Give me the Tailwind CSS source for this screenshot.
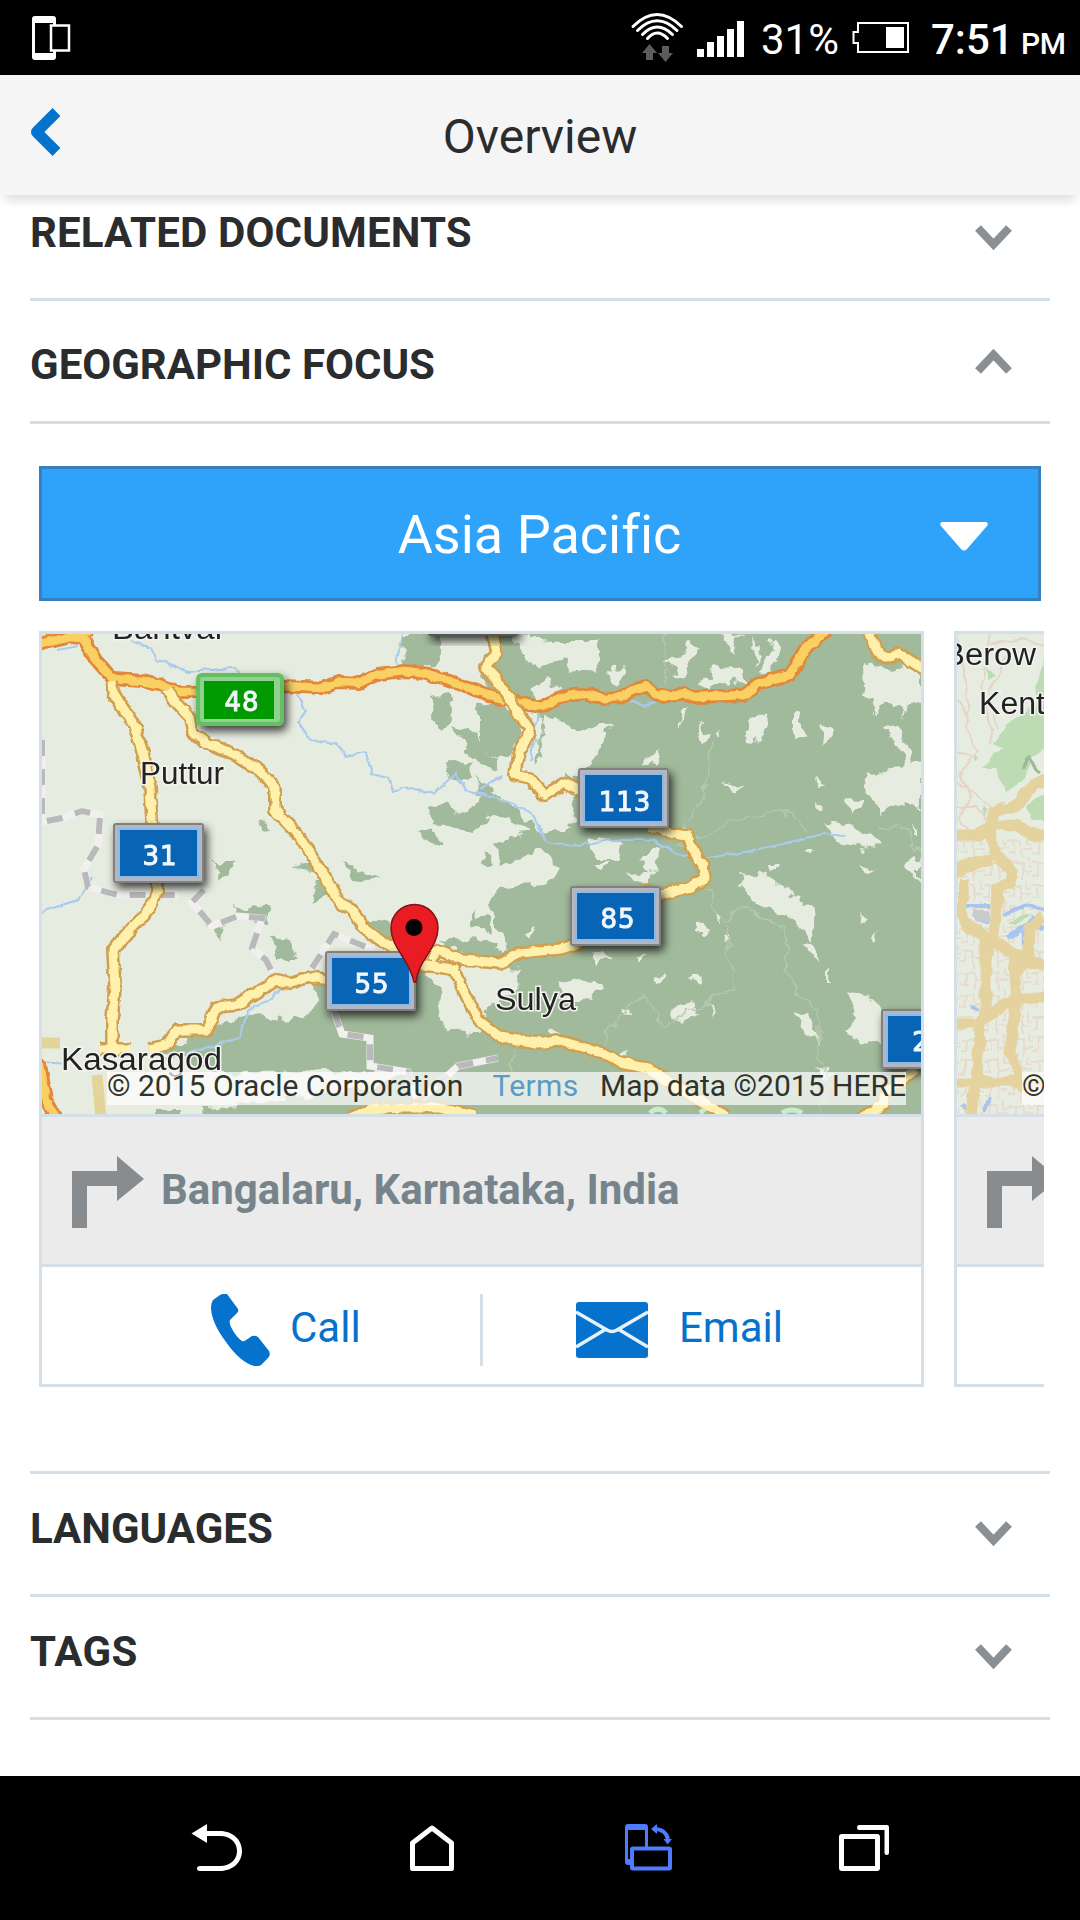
<!DOCTYPE html>
<html lang="en">
<head>
<meta charset="utf-8">
<title>Overview</title>
<script src="https://cdn.jsdelivr.net/npm/@tailwindcss/browser@4"></script>
</head>
<body class="w-[1080px] h-[1920px] overflow-hidden bg-white font-['Roboto',sans-serif] text-[#2b2c2d]">
<div class="flex flex-col w-[1080px] h-[1920px]">

  <!-- Status bar -->
  <div class="flex h-[75px] shrink-0 items-start bg-black text-white">
    <svg class="ml-[30px] block" width="42" height="75" viewBox="30 0 42 75" fill="none">
      <path fill="#fff" fill-rule="evenodd" d="M35 16h18q3 0 3 3v38q0 3-3 3H35q-3 0-3-3V19q0-3 3-3zM35 23v30h18V23z"/>
      <rect x="51" y="25.500" width="18" height="25" fill="#000" stroke="#fff" stroke-width="2.500"/>
    </svg>
    <svg class="ml-[558px] block" width="116" height="75" viewBox="630 0 116 75" fill="none">
      <g stroke="#fff" stroke-width="3" stroke-linecap="round">
        <path d="M633 26.500Q657 2.500 681.500 26.500"/>
        <path d="M637.500 30.500Q657 11 677 30.500"/>
        <path d="M642.500 34.500Q657 19.500 672.500 34.500"/>
        <path d="M647.500 38.500Q657 27.500 667.500 38.500"/>
      </g>
      <path fill="#5c5c5c" d="M649.500 44l7.500 9h-4v7h-7v-7h-4zM662 46h7v7h4l-7.500 9-7.500-9h4z"/>
      <path fill="#fff" d="M697 49h7v8h-7zM707 42h7v15h-7zM717 36h7v21h-7zM727 29h7v28h-7zM737 21h7v36h-7z"/>
    </svg>
    <span class="ml-[15px] mt-[19px] w-[82px] text-[42px] leading-[42px] whitespace-nowrap">31%</span>
    <svg class="ml-[8px] block" width="60" height="75" viewBox="851 0 60 75" fill="none">
      <path d="M858 23h50v29h-50v-9h-4.500V32h4.500z" stroke="#fff" stroke-width="2"/>
      <path fill="#fff" d="M886 27h18v21h-18z"/>
    </svg>
    <span class="ml-[20px] mt-[19px] w-[90px] text-[42px] leading-[42px] font-medium whitespace-nowrap">7:51</span>
    <span class="mt-[29px] text-[30px] leading-[30px] font-medium whitespace-nowrap tracking-[-0.5px]">PM</span>
  </div>

  <!-- Title bar -->
  <div class="relative z-10 flex h-[120px] shrink-0 items-start bg-[#f5f5f5] shadow-[0_11px_9px_-5px_rgba(0,0,0,0.12)]">
    <svg class="ml-[30px] mt-[33px] block" width="31" height="48" viewBox="0 0 31 48"><path fill="none" stroke="#0572ce" stroke-width="11" stroke-linejoin="round" d="M26.500 4L6.500 24l20 20"/></svg>
    <h1 class="mt-[38px] ml-[-61px] w-full text-center text-[48px] leading-[48px] font-normal">Overview</h1>
  </div>

  <!-- Content -->
  <div class="flex h-[1581px] shrink-0 flex-col px-[30px]">
    <div class="flex h-[106px] shrink-0 justify-between border-b-[3px] border-[#d5dfe7] pr-[38px]">
      <h2 class="pt-[17px] text-[42px] leading-[42px] font-bold tracking-[0.16px]">RELATED DOCUMENTS</h2>
      <svg class="mt-[30px] block" width="37" height="26" viewBox="0 0 37 26"><path fill="none" stroke="#898f93" stroke-width="8" d="M3 3l15.500 16.500L34 3"/></svg>
    </div>
    <div class="flex h-[123px] shrink-0 justify-between border-b-[3px] border-[#dcdcdc] pr-[38px]">
      <h2 class="pt-[43px] text-[42px] leading-[42px] font-bold">GEOGRAPHIC FOCUS</h2>
      <svg class="mt-[47px] block" width="37" height="26" viewBox="0 0 37 26"><path fill="none" stroke="#898f93" stroke-width="8" d="M3 23L18.500 6.500 34 23"/></svg>
    </div>

    <div class="mx-[9px] mt-[42px] flex h-[135px] shrink-0 items-center border-[3px] border-[#3580c0] bg-[#2ea3f9] text-white">
      <div class="ml-[97px] flex-1 pt-[2px] text-center text-[54px] leading-[54px] [font-variant-ligatures:none]">Asia Pacific</div>
      <svg class="mr-[50px] mt-[4px] block" width="48" height="30" viewBox="0 0 48 30"><path fill="#fff" d="M2 1h44q3 1 1 4L27 28q-3 3-6 0L1 5Q-1 2 2 1z"/></svg>
    </div>

    <!-- Location cards -->
    <div class="ml-[9px] mr-[6px] mt-[30px] flex h-[756px] shrink-0 gap-[30px] overflow-hidden">
      <div class="flex w-[885px] shrink-0 flex-col border-[3px] border-[#d5dfe7]">
        <div class="relative h-[480px] shrink-0 overflow-hidden bg-[#c4d1bf]">
          <svg class="block blur-[0.6px]" width="879" height="480" viewBox="42 634 879 480" fill="none">
            <defs>
              <filter id="rag" x="0" y="0" width="1" height="1"><feTurbulence type="fractalNoise" baseFrequency="0.06" numOctaves="3" seed="4"/><feDisplacementMap in="SourceGraphic" scale="18" xChannelSelector="R" yChannelSelector="G"/></filter>
              <filter id="wob" filterUnits="userSpaceOnUse" x="30" y="620" width="900" height="510"><feTurbulence type="fractalNoise" baseFrequency="0.09" numOctaves="2" seed="8"/><feDisplacementMap in="SourceGraphic" scale="6" xChannelSelector="R" yChannelSelector="G"/></filter>
              <filter id="sh" x="-20%" y="-20%" width="150%" height="160%"><feDropShadow dx="3" dy="5" stdDeviation="5" flood-color="#000" flood-opacity=".75"/></filter>
              <g id="shield"><rect width="91" height="60" rx="3" fill="#808080" filter="url(#sh)"/><rect x="2" y="2" width="87" height="56" fill="#b3b8c0"/><rect x="5" y="5" width="81" height="50" fill="#8fb9e6"/><rect x="7" y="7" width="77" height="46" fill="#0865b6"/></g>
            </defs>
            <rect x="42" y="634" width="879" height="480" fill="#e7ece1"/>
            <g filter="url(#rag)">
              <rect x="20" y="600" width="920" height="540" fill="none"/>
              <g fill="#a1ba9b">
                <!-- forest -->
                <path d="M500 600H960V1150H205L203 1106L250 1104L300 1098L360 1088L400 1078L380 1071L215 1072L160 1055L190 1036L217 1027L243 1013L273 1019L300 1018L320 1003L318 985L330 970L400 965L440 985L445 1030L478 1035L492 1002L515 997L520 968L485 966L483 950L508 950L500 930L488 905L502 888L542 884L562 870L540 850L500 866L498 845L530 828L480 810L478 780L540 830L570 830L575 790L560 770L535 765L540 720L520 700L492 690L480 670L500 662Z"/>
                <path d="M402 634h35l5 20-5 14h-36zM478 700l40 8 6 20-14 30-32-6z"/>
                <path d="M433 697l18-5 2 22-12 14-12-12zM452 725l20 6 12 22 14 4-4 12-24-12zM447 760l28 5-4 17-18-2zM430 808l20-6 10 12 22-14 6 14-14 18-42-8zM420 832l14-1 8 14-12-2zM258 820l12 4 2 9-12-3zM215 862l22 0-18 20zM232 902l38 8-2 14-18-2zM272 936l18 4 8 18-20 0zM204 928l20 0-4 7zM345 862l20 8 14 12-26-4zM312 882l16 2-14 24zM355 918l30 4 20 22-40-8zM290 866l30-2-10 8zM484 850l10 12-14 4zM470 912l20 6 2 12-18-4zM440 940l60 4-4 14-36-2zM155 1106l22 0 0 12-22 0z"/>
              </g>
              <g fill="#e7ece1">
                <!-- clearings -->
                <path d="M512 634l40 4 18 2 30 0-6 34-22-2-12-14-20 8-18-6zM532 690l12-14 18 18-22 6zM608 668l16-4-6 26-8-4zM690 640l10 8-18 30-12 2 4-14-12-6 20-4zM722 634l20 4-10 16zM752 640l10 6-6 20zM772 640l8 8-10 28-8-8zM712 664l30 6 10 18-26-8-16 8zM695 684l20-6-8 16zM542 716l30 12 16 0 20-6-10 30-16 24-44-8zM646 762l10-10 0 16zM682 708l8 0-8 16zM746 720l22-8-8 30-12-2zM792 712l14 8-2 20-12-2zM824 722l10 10-12 10zM694 726l14 8-6 6zM714 734l10-4-8 10zM722 784l18 4-4 6z"/>
                <path d="M862 664l30 6 29-10v44l-20 12-10-14-16 10-12-24zM884 730l14-8 8 20 10 24-12-2-6-20zM862 776l30-6 28-12v50l-20-4-20 12zM846 798l18 2-10 14zM816 775l8 10-6 6zM812 800l10 6-8 2zM824 820l30 8 28 16-20 6-30-14zM912 824l8 12-6 0zM804 850l10 0-6 6zM740 870l30 8 26 18 18 20-4 30-16-26-30-14-26-18zM768 864l10 0-6 10zM800 944l14 4 6 14-12-6zM856 868l20 4-10 6zM860 912l8 10-6 4zM870 940l10-8-6 12zM826 968l6 12-6 0zM914 912l8 20zM848 990l20 6 22 20-4 36-42-20 16-12zM794 1008l18 14 8 20-20-20zM906 868l12-10 0 24z"/>
                <path d="M592 838l30 8-4 12-30 0zM590 865l20-6-6 16zM640 860l16-12-4 24zM626 876l30-6-10 14zM594 952l14 4-10 8zM636 952l12 2-8 6zM652 972l10 2-6 8zM686 974l22 4-6 8zM700 920l10 8-10 6zM718 910l4 6-6 12zM724 936l8 0-4 8zM672 1016l16-16 10 14-14 10zM706 1000l8 12-4 4zM556 985l26-8 20 8-8 16-30-4zM618 1012l14 2-10 4zM525 930l12-4-8 12zM548 1028l14 6-12 2zM620 1050l8 4-8 2zM815 1068l20 6-14 4z"/>
              </g>
              <path stroke="#b5c8ae" stroke-width="1.500" d="M665 634v50M710 742l-4 50-20 38-6 16 40-20 40-12 30 0 20 20M706 892l20 30 14-16 30 16 16 8 0 40 12 22 20 20 0 40 12 30-10 40M728 924l6 60-40 24-30 20-22-34-35 40 2 20M515 1080l-4-30M880 830l22-4 19 32"/>
            </g>
            <!-- rivers -->
            <g filter="url(#wob)" stroke="#a9cbee" stroke-width="2.200">
              <path d="M130 640l20 8 8 12 22 8 8 4 46-4 6 5M56 650l22-4M298 694l8 16-8 14 8 12 16 6 14 2 10 12 20-4 6 22 16 4 6 12 20-2 20 6 22-20 10 16 26 7M402 634l-6 30M480 790l22-14M482 794l20 6 28 12 18 30 24 4 40-6 40 0 26 14 30 4 50-8 65-16 22 2M538 712l-8 50M42 912l36-12 14-22M160 1060l38-10 40-12 12-30 20-8 16-20 36-4M630 700l14 6 12-4M42 1062l24 2"/>
            </g>
            <!-- district boundaries -->
            <path stroke="#f1f0ef" stroke-width="7" d="M42 740v30l0 52 20-4 20-7 18 4-2 30-14 24 4 18 30 8h60M204 890l-12 12 20 24 26-10 24 2-10 30 14 12 6 12M312 968l22-34 20 8 20 8M334 1012l8 22 28 4 0 28 38 6 10 30 40-36 40-8"/>
            <path stroke="#b9b9bb" stroke-width="6" stroke-dasharray="16 13" d="M42 740v30l0 52 20-4 20-7 18 4-2 30-14 24 4 18 30 8h60M204 890l-12 12 20 24 26-10 24 2-10 30 14 12 6 12M312 968l22-34 20 8 20 8M334 1012l8 22 28 4 0 28 38 6 10 30 40-36 40-8"/>
            <path stroke="#e3d49b" stroke-width="11" d="M42 1043h18M97 1075l4 45"/>
            <!-- roads -->
            <g filter="url(#wob)" stroke-linejoin="round">
              <path stroke="#e0883a" stroke-width="14" d="M36 645L70 637L83 638L96 660L113 679L143 681L160 685L180 692L240 692L284 686L322 688L340 682L360 683L378 674L405 671L428 674L455 683L480 692L500 699L520 703L540 707L562 697L582 694L605 698L620 697L634 690L646 686L655 694L672 697L683 693L695 697L744 695L757 684L790 675L803 652L830 626M86 636l4-16M38 1060l8 40 14 26"/>
              <path stroke="#fbd062" stroke-width="8.500" d="M36 645L70 637L83 638L96 660L113 679L143 681L160 685L180 692L240 692L284 686L322 688L340 682L360 683L378 674L405 671L428 674L455 683L480 692L500 699L520 703L540 707L562 697L582 694L605 698L620 697L634 690L646 686L655 694L672 697L683 693L695 697L744 695L757 684L790 675L803 652L830 626M86 636l4-16M38 1060l8 40 14 26"/>
              <path stroke="#cfa050" stroke-width="14" d="M112 680L113 693L133 723L143 753L150 787L152 820L158 887L153 903L140 920L127 933L113 950L115 987L112 1020L112 1050M167 690L177 703L190 717L193 733L210 745L230 752L263 773L275 787L275 810L297 833L310 853L325 877L340 903L353 910L363 927L380 940L397 950L425 965L445 968L455 970L463 990L478 1020L500 1037L537 1043L557 1040L603 1053L620 1063L647 1068L670 1083L693 1097L727 1116M430 960L438 950L463 960L500 963L520 953L560 949L582 942M640 890L662 894L690 888L705 878L702 862L695 855L688 836L670 833L650 826M100 1049h30M150 1049L167 1045L177 1030L207 1030L217 1007L237 1005L277 980L290 983L310 977L330 980M492 628L497 653L485 667L497 680L510 700L530 730L517 760L515 775L530 778L545 795L563 783L582 792M866 622L876 650L886 658L900 654L926 671M350 1118L370 1110L400 1108L440 1108L475 1116M860 1118L883 1105L885 1093L915 1070"/>
              <path stroke="#fff1ab" stroke-width="9" d="M112 680L113 693L133 723L143 753L150 787L152 820L158 887L153 903L140 920L127 933L113 950L115 987L112 1020L112 1050M167 690L177 703L190 717L193 733L210 745L230 752L263 773L275 787L275 810L297 833L310 853L325 877L340 903L353 910L363 927L380 940L397 950L425 965L445 968L455 970L463 990L478 1020L500 1037L537 1043L557 1040L603 1053L620 1063L647 1068L670 1083L693 1097L727 1116M430 960L438 950L463 960L500 963L520 953L560 949L582 942M640 890L662 894L690 888L705 878L702 862L695 855L688 836L670 833L650 826M100 1049h30M150 1049L167 1045L177 1030L207 1030L217 1007L237 1005L277 980L290 983L310 977L330 980M492 628L497 653L485 667L497 680L510 700L530 730L517 760L515 775L530 778L545 795L563 783L582 792M866 622L876 650L886 658L900 654L926 671M350 1118L370 1110L400 1108L440 1108L475 1116M860 1118L883 1105L885 1093L915 1070"/>
            </g>
            <rect x="428" y="612" width="90" height="24" rx="3" fill="#555" filter="url(#sh)"/>
            <!-- place names -->
            <g font-family="Liberation Sans, sans-serif" font-size="31" fill="#222" stroke="#f3f3ef" stroke-width="3" paint-order="stroke">
              <text x="112" y="639" textLength="110" lengthAdjust="spacingAndGlyphs">Bantval</text>
              <text x="140" y="784" textLength="84" lengthAdjust="spacingAndGlyphs">Puttur</text>
              <text x="495" y="1010" textLength="81" lengthAdjust="spacingAndGlyphs">Sulya</text>
              <text x="61" y="1070" textLength="161" lengthAdjust="spacingAndGlyphs">Kasaragod</text>
            </g>
            <!-- route shields -->
            <rect x="196" y="673" width="88" height="53" rx="6" fill="#62bf62" filter="url(#sh)"/><rect x="200" y="677" width="80" height="45" rx="3" fill="#8fd18f"/><rect x="204" y="681" width="70" height="38" fill="#009a00"/>
            <use href="#shield" x="113" y="823"/><use href="#shield" x="578" y="768"/><use href="#shield" x="570" y="886"/><use href="#shield" x="325" y="951"/><use href="#shield" x="881" y="1009"/>
            <g font-family="DejaVu Sans, sans-serif" font-size="26" fill="#f2f7fc" stroke="#f2f7fc" stroke-width="1" text-anchor="middle" letter-spacing="1">
              <text x="242" y="711">48</text><text x="160" y="865">31</text><text x="625" y="811">113</text><text x="618" y="928">85</text><text x="372" y="993">55</text><text x="921" y="1051">2</text>
            </g>
            <path d="M414 982C410 960 391 948 391 928a23.500 23.500 0 0 1 47 0C438 948 418 960 416 982z" fill="#e91c24" stroke="#7d1418" stroke-width="1.500"/>
            <circle cx="414" cy="927.500" r="8.500" fill="#000"/>
            <path d="M650 1113q8-8 16 0M700 1113l5-4M782 1113q10-6 20 0" stroke="#c8ecd0" stroke-width="5"/>
          </svg>
          <div class="absolute top-[438px] left-[65px] flex h-[33px] w-[799px] bg-white/70 text-[30px] leading-[28px] whitespace-nowrap text-[#2f332c]">
            <span class="w-[388px]">© 2015 Oracle Corporation</span>
            <span class="w-[108px] text-[#5a9bc6] tracking-[0.3px]">Terms</span>
            <span>Map data ©2015 HERE</span>
          </div>
        </div>
        <div class="flex h-[153px] shrink-0 border-y-[3px] border-[#d5dfe7] bg-[#ebebeb]">
          <svg class="mt-[39px] ml-[30px] block" width="72" height="72" viewBox="0 0 72 72"><path fill="#888c8f" d="M0 15h45V0l27 23-27 22V30H15v42H0z"/></svg>
          <div class="mt-[52px] ml-[17px] text-[42px] leading-[42px] font-bold whitespace-nowrap text-[#77848b]">Bangalaru, Karnataka, India</div>
        </div>
        <div class="flex h-[117px] shrink-0 items-start pt-[27px] text-[42px] leading-[42px] text-[#0572ce]">
          <svg class="ml-[168px] block" width="60" height="72" viewBox="0 0 60 72"><path fill="#0572ce" d="M3 6L10 1q4-2 7-1l11 15q1 3-1 4l-7 7q-1 3 1 7 5 10 11 14 2 1 4-1l6-4q3-1 6 1l11 14q2 4-1 7l-7 7q-3 2-7 1-14-4-28-24Q1 28 1 13q0-4 2-7z"/></svg>
          <span class="mt-[13px] ml-[20px] w-[68px]">Call</span>
          <div class="ml-[122px] h-[72px] w-[3px] bg-[#d5dfe7]"></div>
          <svg class="mt-[8px] ml-[93px] block" width="72" height="56" viewBox="0 0 72 56"><rect width="72" height="56" rx="3" fill="#0572ce"/><path fill="none" stroke="#e6f1fb" stroke-width="3.600" d="M0 10l31 18q5 3 10 0L72 10M0 45l30-18M72 45L42 27"/></svg>
          <span class="mt-[13px] ml-[31px]">Email</span>
        </div>
      </div>
      <div class="flex w-[885px] shrink-0 flex-col border-[3px] border-[#d5dfe7]">
        <div class="relative h-[480px] shrink-0 overflow-hidden bg-[#e7ece1]">
          <svg class="block blur-[0.6px]" width="87" height="480" viewBox="957 634 87 480" fill="none">
            <defs>
              <filter id="wob2" filterUnits="userSpaceOnUse" x="940" y="620" width="120" height="510"><feTurbulence type="fractalNoise" baseFrequency="0.06" numOctaves="2" seed="3"/><feDisplacementMap in="SourceGraphic" scale="8" xChannelSelector="R" yChannelSelector="G"/></filter>
              <pattern id="streets" width="24" height="22" patternUnits="userSpaceOnUse"><path d="M0 5h14v17M14 13h10M6 5v12H0M20 0v8h4" stroke="#e6dccf" stroke-width="2"/></pattern>
            </defs>
            <rect x="957" y="634" width="87" height="480" fill="#e7ece1"/>
            <g filter="url(#wob2)">
              <path fill="url(#streets)" d="M957 838h100v290H950V850z"/>
              <path fill="#bddcb4" d="M1044 660l-10 34 4 10-30 20-14 20 8 4-20 20 14 0 10 24 16-10 10-24 20-14zM1025 806l20-14v30l-14-4zM986 668l8 6-6 6zM974 754l4 6-4 4zM982 806l6 4-4 8z"/>
              <path stroke="#9dba98" stroke-width="3" d="M1022 768l6-10 12 16"/>
              <path stroke="#e5d5c5" stroke-width="2" d="M958 640l8 40 2 50 10 20-22 30 24 20 20 14 20-4M957 700l12 20M990 634l-8 50 10 60M960 770l10 30-12 20 20 20M1010 650l-20 40 6 40M957 752l16 6M957 808h18l14 12M1004 800l-20 20M990 646l30-8 24 8"/>
              <path stroke="#a8c5f0" stroke-width="4" d="M967 906h24M988 922h-8M1004 914l20-8 20 4M1034 916l-10 16v14M1008 938l20-12M970 1006l8 2M962 1102l6 10M990 1096l-6 16M1044 926l-4 4"/>
              <path fill="#c9cacb" d="M974 910h16v12l-14 2-4-8z"/>
              <path fill="#bddcb4" d="M1010 924l14-10 6 0-12 12z"/>
            </g>
            <g stroke="#e5d39f" stroke-width="11" stroke-linejoin="round" filter="url(#wob2)">
              <path d="M950 835h25l20-10h20l20 10h20M1050 780l-16 4-16 20-24 8-4 18 6 26 16 16-2 12-12 4-2 30-10 40M950 874l20-10 22-4M964 878l-2 40 8 12 20 8 20 14 20 10 20 6M1044 916l-14 14-2 30-14 12M986 940v60l-6 30-4 50-6 34M1012 952l4 50-6 50 14 38M950 1024h30l24-20 20-6 20 0 12-6M950 1082l40 0 30 0h35"/>
            </g>
            <g font-family="Liberation Sans, sans-serif" font-size="31" fill="#222" stroke="#f3f3ef" stroke-width="3" paint-order="stroke">
              <text x="943" y="665" textLength="93" lengthAdjust="spacingAndGlyphs">Berow</text><text x="979" y="714" textLength="66" lengthAdjust="spacingAndGlyphs">Kent</text>
            </g>
          </svg>
          <div class="absolute top-[438px] left-[65px] h-[33px] w-[60px] bg-white/70 text-[30px] leading-[28px] text-[#2f332c]">©</div>
        </div>
        <div class="flex h-[153px] shrink-0 border-y-[3px] border-[#d5dfe7] bg-[#ebebeb]">
          <svg class="mt-[39px] ml-[30px] block" width="72" height="72" viewBox="0 0 72 72"><path fill="#888c8f" d="M0 15h45V0l27 23-27 22V30H15v42H0z"/></svg>
        </div>
      </div>
    </div>

    <div class="mt-[84px] flex h-[126px] shrink-0 justify-between border-y-[3px] border-[#d5dfe7] pr-[38px]">
      <h2 class="pt-[34px] text-[42px] leading-[42px] font-bold">LANGUAGES</h2>
      <svg class="mt-[47px] block" width="37" height="26" viewBox="0 0 37 26"><path fill="none" stroke="#898f93" stroke-width="8" d="M3 3l15.500 16.500L34 3"/></svg>
    </div>
    <div class="flex h-[123px] shrink-0 justify-between border-b-[3px] border-[#d5dfe7] pr-[38px]">
      <h2 class="pt-[34px] text-[42px] leading-[42px] font-bold tracking-[0.4px]">TAGS</h2>
      <svg class="mt-[47px] block" width="37" height="26" viewBox="0 0 37 26"><path fill="none" stroke="#898f93" stroke-width="8" d="M3 3l15.500 16.500L34 3"/></svg>
    </div>
  </div>

  <!-- Navigation bar -->
  <div class="flex h-[144px] shrink-0 items-start bg-black pt-[46px]">
    <svg class="ml-[190px] block" width="54" height="52" viewBox="190 1822 54 52" fill="none"><path fill="#fff" d="M191.500 1833.500L207 1824v19z"/><path fill="#fff" d="M205 1831h15c13 0 22 9 22 20s-9 20-22 20h-20q-3 0-3-2.500t3-2.500h20c11 0 17-7 17-15s-6-15-17-15h-15z"/></svg>
    <svg class="ml-[164px] block" width="48" height="52" viewBox="408 1822 48 52" fill="none"><path stroke="#fff" stroke-width="5" stroke-linejoin="round" d="M432 1828l19.500 15v25.500h-39V1843z"/></svg>
    <svg class="ml-[167px] block" width="51" height="52" viewBox="623 1822 51 52" fill="none"><path fill="#4d7cff" fill-rule="evenodd" d="M628 1824h17q3 0 3 3v22h-3v-19h-17v29h5v6h-5q-3 0-3-3v-35q0-3 3-3z"/><rect x="632" y="1848.500" width="38" height="20" rx="1" stroke="#4d7cff" stroke-width="4"/><path stroke="#4d7cff" stroke-width="4" d="M656 1829q10 1 12 10"/><path fill="#4d7cff" d="M651 1829l6-5v10zM663.500 1839h8.500l-4.500 5.500z"/></svg>
    <svg class="ml-[163px] block" width="54" height="52" viewBox="837 1822 54 52" fill="none"><path fill="#fff" fill-rule="evenodd" d="M842 1834h35q3 0 3 3v31q0 3-3 3h-35q-3 0-3-3v-31q0-3 3-3zM844 1839v27h31v-27z"/><path fill="#fff" d="M859 1825h28q2 0 2 2v26q0 2-2.200 2t-2.300-2v-23H859q-2 0-2-2.500t2-2.500z"/></svg>
  </div>
</div>
</body>
</html>
